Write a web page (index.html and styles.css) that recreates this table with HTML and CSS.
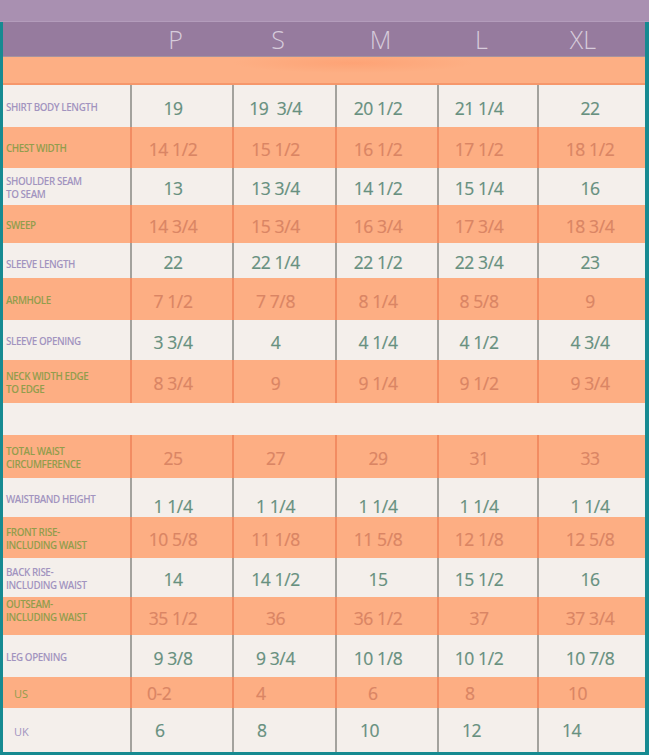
FILE: index.html
```html
<!DOCTYPE html>
<html>
<head>
<meta charset="utf-8">
<link rel="stylesheet" href="styles.css">
</head>
<body>
<div class="page">
  <div class="topbar"></div>
  <div class="frame">
    <div class="row head">
      <div class="cell"></div>
      <div class="cell">P</div>
      <div class="cell">S</div>
      <div class="cell">M</div>
      <div class="cell">L</div>
      <div class="cell">XL</div>
    </div>
    <div class="band"></div>

    <div class="row lt h42"><div class="lbl">SHIRT BODY LENGTH</div><div class="v">19</div><div class="v">19&nbsp; 3/4</div><div class="v">20 1/2</div><div class="v">21 1/4</div><div class="v">22</div></div>
    <div class="row or h41"><div class="lbl">CHEST WIDTH</div><div class="v">14 1/2</div><div class="v">15 1/2</div><div class="v">16 1/2</div><div class="v">17 1/2</div><div class="v">18 1/2</div></div>
    <div class="row lt h37"><div class="lbl">SHOULDER SEAM<br>TO SEAM</div><div class="v">13</div><div class="v">13 3/4</div><div class="v">14 1/2</div><div class="v">15 1/4</div><div class="v">16</div></div>
    <div class="row or h38"><div class="lbl">SWEEP</div><div class="v">14 3/4</div><div class="v">15 3/4</div><div class="v">16 3/4</div><div class="v">17 3/4</div><div class="v">18 3/4</div></div>
    <div class="row lt h35"><div class="lbl low">SLEEVE LENGTH</div><div class="v">22</div><div class="v">22 1/4</div><div class="v">22 1/2</div><div class="v">22 3/4</div><div class="v">23</div></div>
    <div class="row or h42"><div class="lbl">ARMHOLE</div><div class="v">7 1/2</div><div class="v">7 7/8</div><div class="v">8 1/4</div><div class="v">8 5/8</div><div class="v">9</div></div>
    <div class="row lt h40"><div class="lbl">SLEEVE OPENING</div><div class="v">3 3/4</div><div class="v">4</div><div class="v">4 1/4</div><div class="v">4 1/2</div><div class="v">4 3/4</div></div>
    <div class="row or h43"><div class="lbl">NECK WIDTH EDGE<br>TO EDGE</div><div class="v">8 3/4</div><div class="v">9</div><div class="v">9 1/4</div><div class="v">9 1/2</div><div class="v">9 3/4</div></div>
    <div class="row lt h32 empty"></div>
    <div class="row or h43"><div class="lbl">TOTAL WAIST<br>CIRCUMFERENCE</div><div class="v">25</div><div class="v">27</div><div class="v">29</div><div class="v">31</div><div class="v">33</div></div>
    <div class="row lt h39"><div class="lbl">WAISTBAND HEIGHT</div><div class="v low2">1 1/4</div><div class="v low2">1 1/4</div><div class="v low2">1 1/4</div><div class="v low2">1 1/4</div><div class="v low2">1 1/4</div></div>
    <div class="row or h41"><div class="lbl">FRONT RISE-<br>INCLUDING WAIST</div><div class="v">10 5/8</div><div class="v">11 1/8</div><div class="v">11 5/8</div><div class="v">12 1/8</div><div class="v">12 5/8</div></div>
    <div class="row lt h39"><div class="lbl">BACK RISE-<br>INCLUDING WAIST</div><div class="v">14</div><div class="v">14 1/2</div><div class="v">15</div><div class="v">15 1/2</div><div class="v">16</div></div>
    <div class="row or h38"><div class="lbl up">OUTSEAM-<br>INCLUDING WAIST</div><div class="v">35 1/2</div><div class="v">36</div><div class="v">36 1/2</div><div class="v">37</div><div class="v">37 3/4</div></div>
    <div class="row lt h42"><div class="lbl">LEG OPENING</div><div class="v">9 3/8</div><div class="v">9 3/4</div><div class="v">10 1/8</div><div class="v">10 1/2</div><div class="v">10 7/8</div></div>
    <div class="row or h31 us"><div class="lbl ind big">US</div><div class="v lft">0-2</div><div class="v lft">4</div><div class="v lft">6</div><div class="v lft">8</div><div class="v lft">10</div></div>
    <div class="row lt h44 uk"><div class="lbl ind big">UK</div><div class="v lft">6</div><div class="v lft">8</div><div class="v lft">10</div><div class="v lft">12</div><div class="v lft">14</div></div>
  </div>
</div>
</body>
</html>
```

FILE: styles.css
```css
* { box-sizing: border-box; }
html, body { margin: 0; padding: 0; background: #1b8a90; }
.page {
  width: 649px;
  height: 755px;
  overflow: hidden;
  font-family: "Open Sans", "Liberation Sans", sans-serif;
}
.topbar {
  height: 22px;
  background: #a990b1;
  border-bottom: 1px solid #b39cbb;
}
.frame {
  border-left: 3px solid #168a91;
  border-right: 4px solid #168a91;
  border-bottom: 3px solid #168a91;
  background: #f4efeb;
}
.row {
  display: grid;
  grid-template-columns: 127px 102px 103px 102px 100px 108px;
}
.head {
  height: 35px;
  background: #967b9e;
  border-bottom: 1px solid #a4939f;
  color: #d7ccdb;
  font-weight: 300;
  font-size: 25px;
  align-items: center;
}
.head .cell {
  text-align: center;
  padding-right: 11px;
  line-height: 34px;
}
.head .cell:nth-child(6) { padding-right: 16px; }
.band {
  height: 28px;
  background:
    radial-gradient(ellipse 120px 10px at 350px 6px, rgba(255, 140, 90, 0.35), rgba(255, 140, 90, 0) 100%),
    #fdaf84;
  border-bottom: 2px solid #f6976b;
}
.lt { background: #f4efeb; }
.or { background: #fdae83; }
.h31 { height: 31px; }
.h32 { height: 32px; }
.h35 { height: 35px; }
.h37 { height: 37px; }
.h38 { height: 38px; }
.h39 { height: 39px; }
.h40 { height: 40px; }
.h41 { height: 41px; }
.h42 { height: 42px; }
.h43 { height: 43px; }
.h44 { height: 44px; }

.lbl {
  display: flex;
  align-items: center;
  padding-left: 3px;
  padding-top: 2px;
  font-size: 9.8px;
  font-weight: 600;
  letter-spacing: -0.4px;
  line-height: 13px;
  white-space: nowrap;
}
.lbl.low { padding-top: 8px; }
.lbl.up { padding-top: 0; padding-bottom: 10px; }
.lbl.ind { padding-left: 11px; }
.lbl.big { font-size: 11px; letter-spacing: 0; font-weight: 400; }
.lt .lbl { color: #a294bf; }
.or .lbl { color: #929d4c; }

.v {
  display: flex;
  align-items: center;
  justify-content: center;
  padding-right: 18px;
  padding-top: 3px;
  font-size: 17.5px;
  letter-spacing: -0.4px;
  -webkit-text-stroke: 0.2px currentColor;
}
.v:nth-child(6) { padding-right: 4px; }
.v.low2 { padding-top: 16px; }
.v.lft { justify-content: flex-start; padding-top: 0; padding-right: 0; }
.uk .v.lft { padding-left: 23px; }
.us .v.lft:nth-child(2) { padding-left: 15px; }
.us .v.lft:nth-child(3) { padding-left: 22px; }
.us .v.lft:nth-child(4) { padding-left: 31px; }
.us .v.lft:nth-child(5) { padding-left: 26px; }
.us .v.lft:nth-child(6) { padding-left: 29px; }
.lt .v { color: #67907f; border-left: 2px solid #a3a29d; }
.or .v { color: #da8564; border-left: 2px solid #f28c62; }
```
